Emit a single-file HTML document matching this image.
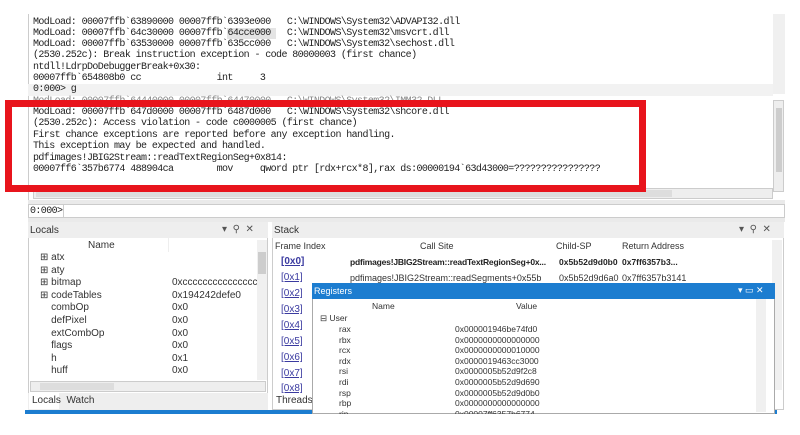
<!DOCTYPE html><html><head><style>
*{margin:0;padding:0;box-sizing:border-box}
body{width:800px;height:435px;background:#fff;position:relative;overflow:hidden;font-family:"Liberation Sans",sans-serif}
.a{position:absolute}
.m{position:absolute;left:33px;font-family:"Liberation Mono",monospace;font-size:10px;letter-spacing:-0.6px;color:#222;white-space:pre;line-height:11.3px}
.s{font-size:10px;color:#333;white-space:pre;position:absolute}
.t{font-size:9px;color:#333;white-space:pre;position:absolute}
.lk{color:#3a3aa0;text-decoration:underline;font-size:10px;position:absolute;left:281px}
.r{font-size:8.5px;color:#333;position:absolute;white-space:pre}
</style></head><body>
<div class="a" style="left:28px;top:14px;width:757px;height:186px;background:#fff;border-left:1px solid #ccc"></div>
<div class="a" style="left:28px;top:84px;width:745px;height:12px;background:#f2f2f2"></div>
<div class="a" style="left:773px;top:14px;width:12px;height:80px;background:#f0f0f0"></div>
<div class="a" style="left:773px;top:100px;width:11px;height:92px;background:#eee;border:1px solid #ccc"></div>
<div class="a" style="left:776px;top:108px;width:6px;height:64px;background:#cdcdcd"></div>
<div class="a" style="left:33px;top:188px;width:740px;height:11px;background:#eee;border:1px solid #ccc"></div>
<div class="a" style="left:36px;top:190px;width:636px;height:7px;background:#ddd"></div>
<div class="m" style="top:16.5px">ModLoad: 00007ffb`63890000 00007ffb`6393e000   C:\WINDOWS\System32\ADVAPI32.dll
ModLoad: 00007ffb`64c30000 00007ffb`<span style="background:#e4e4e4">64cce000 </span>  C:\WINDOWS\System32\msvcrt.dll
ModLoad: 00007ffb`63530000 00007ffb`635cc000   C:\WINDOWS\System32\sechost.dll
(2530.252c): Break instruction exception - code 80000003 (first chance)
ntdll!LdrpDoDebuggerBreak+0x30:
00007ffb`654808b0 cc              int     3
0:000> g
<span style="color:#888">ModLoad: 00007ffb`64440000 00007ffb`64470000   C:\WINDOWS\System32\IMM32.DLL</span></div>
<div class="m" style="top:106.5px;line-height:11.5px">ModLoad: 00007ffb`647d0000 00007ffb`6487d000   C:\WINDOWS\System32\shcore.dll
(2530.252c): Access violation - code c0000005 (first chance)
First chance exceptions are reported before any exception handling.
This exception may be expected and handled.
pdfimages!JBIG2Stream::readTextRegionSeg+0x814:
00007ff6`357b6774 488904ca        mov     qword ptr [rdx+rcx*8],rax ds:00000194`63d43000=????????????????</div>
<div class="a" style="left:5px;top:100px;width:641px;height:92px;border:7px solid #e8141c"></div>
<div class="a" style="left:28px;top:200px;width:757px;height:22px;background:#eaeaea"></div>
<div class="a" style="left:28px;top:204px;width:757px;height:14px;background:#fff;border:1px solid #ccc"></div>
<div class="m" style="top:206px;left:30px">0:000&gt;</div>
<div class="a" style="left:63px;top:204px;width:1px;height:14px;background:#ccc"></div>
<!-- Locals -->
<div class="a" style="left:28px;top:222px;width:240px;height:186px;background:#fff;border:1px solid #ccc"></div>
<div class="a" style="left:28px;top:222px;width:240px;height:16px;background:#eee"></div>
<div class="s" style="left:30px;top:225px">Locals</div>
<div class="s" style="left:222px;top:224px;color:#555">▾ &nbsp;⚲ &nbsp;✕</div>
<div class="s" style="left:88px;top:240px">Name</div>
<div class="a" style="left:168px;top:238px;width:1px;height:14px;background:#eee"></div>
<div class="s" style="left:40px;top:252px;line-height:12.6px;font-size:10px">⊞ atx
⊞ aty
⊞ bitmap
⊞ codeTables
    combOp
    defPixel
    extCombOp
    flags
    h
    huff</div>
<div class="s" style="left:172px;top:252px;line-height:12.6px">

0xcccccccccccccccc
0x194242defe0
0x0
0x0
0x0
0x0
0x1
0x0</div>
<div class="a" style="left:257px;top:240px;width:10px;height:140px;background:#f0f0f0"></div>
<div class="a" style="left:258px;top:252px;width:8px;height:22px;background:#cdcdcd"></div>
<div class="a" style="left:30px;top:381px;width:236px;height:11px;background:#eee;border:1px solid #ccc"></div>
<div class="a" style="left:40px;top:383px;width:74px;height:7px;background:#ddd"></div>
<div class="a" style="left:28px;top:393px;width:240px;height:17px;background:#eee"></div>
<div class="a" style="left:29px;top:393px;width:30px;height:16px;background:#fff"></div>
<div class="s" style="left:32px;top:395px">Locals &nbsp;Watch</div>
<!-- Stack -->
<div class="a" style="left:272px;top:222px;width:512px;height:188px;background:#fff;border:1px solid #ccc"></div>
<div class="a" style="left:272px;top:222px;width:512px;height:16px;background:#eee"></div>
<div class="s" style="left:274px;top:225px">Stack</div>
<div class="s" style="left:739px;top:224px;color:#555">▾ &nbsp;⚲ &nbsp;✕</div>
<div class="t" style="left:275px;top:241px">Frame Index</div>
<div class="t" style="left:420px;top:241px">Call Site</div>
<div class="t" style="left:556px;top:241px">Child-SP</div>
<div class="t" style="left:622px;top:241px">Return Address</div>
<div class="a" style="left:772px;top:240px;width:10px;height:150px;background:#f0f0f0"></div>
<div class="lk" style="top:256px;font-weight:bold">[0x0]</div>
<div class="t" style="left:350px;top:257px;font-weight:bold;color:#222;font-size:8.5px;letter-spacing:-0.2px">pdfimages!JBIG2Stream::readTextRegionSeg+0x...</div>
<div class="t" style="left:559px;top:257px;font-weight:bold;color:#222;font-size:8.5px">0x5b52d9d0b0</div>
<div class="t" style="left:622px;top:257px;font-weight:bold;color:#222;font-size:8.5px">0x7ff6357b3...</div>
<div class="lk" style="top:272px">[0x1]</div>
<div class="t" style="left:350px;top:273px">pdfimages!JBIG2Stream::readSegments+0x55b</div>
<div class="t" style="left:559px;top:273px">0x5b52d9d6a0</div>
<div class="t" style="left:622px;top:273px">0x7ff6357b3141</div>
<div class="lk" style="top:288px">[0x2]</div><div class="lk" style="top:304px">[0x3]</div><div class="lk" style="top:320px">[0x4]</div><div class="lk" style="top:336px">[0x5]</div><div class="lk" style="top:352px">[0x6]</div><div class="lk" style="top:368px">[0x7]</div><div class="lk" style="top:383px">[0x8]</div>
<div class="s" style="left:276px;top:395px">Threads</div>
<div class="a" style="left:25px;top:410px;width:752px;height:4px;background:#1c7dd0"></div>
<!-- Registers -->
<div class="a" style="left:312px;top:283px;width:463px;height:131px;background:#fff;border:1px solid #aaa"></div>
<div class="a" style="left:312px;top:283px;width:463px;height:16px;background:#1c7dd0"></div>
<div class="s" style="left:314px;top:286px;color:#fff;font-size:9px">Registers</div>
<div class="s" style="left:738px;top:285px;color:#fff;font-size:9px">▾ ▭ ✕</div>
<div class="r" style="left:372px;top:301px">Name</div>
<div class="r" style="left:516px;top:301px">Value</div>
<div class="a" style="left:756px;top:299px;width:10px;height:113px;background:#f0f0f0"></div>
<div class="r" style="left:320px;top:313px">⊟ User</div>
<div class="r" style="left:339px;top:324px;line-height:10.6px">rax
rbx
rcx
rdx
rsi
rdi
rsp
rbp
rip</div>
<div class="r" style="left:455px;top:324px;line-height:10.6px">0x000001946be74fd0
0x0000000000000000
0x0000000000010000
0x0000019463cc3000
0x0000005b52d9f2c8
0x0000005b52d9d690
0x0000005b52d9d0b0
0x0000000000000000
0x00007ff6357b6774</div>
<div class="a" style="left:0;top:414px;width:800px;height:21px;background:#fff"></div>
</body></html>
